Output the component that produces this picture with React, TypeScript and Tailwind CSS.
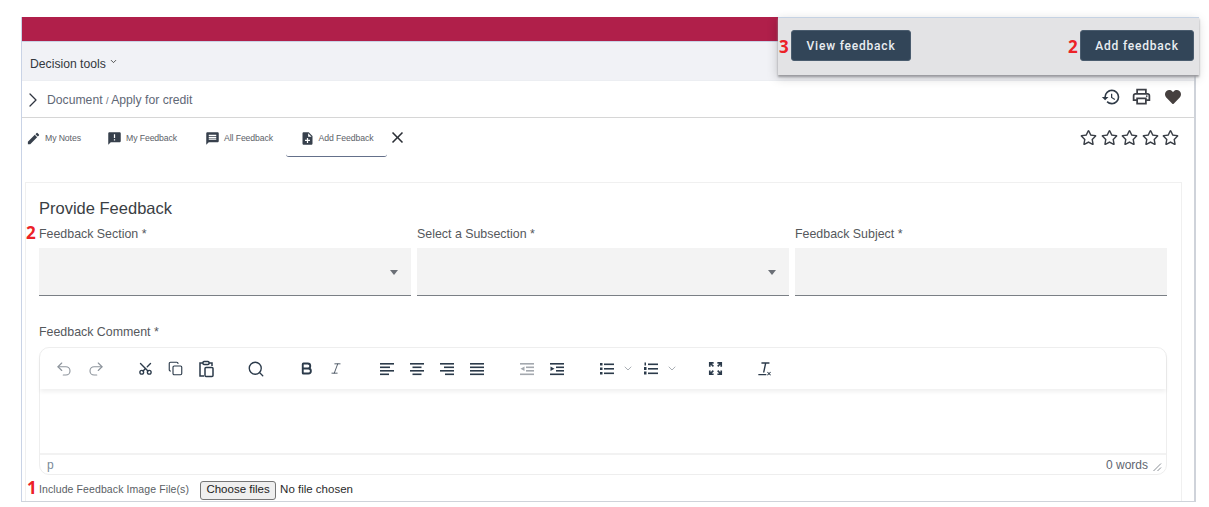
import React from 'react'
import { FaHeart, FaRegStar } from 'react-icons/fa'
import { MdAnnouncement, MdClose, MdEdit, MdHistory, MdMessage, MdNoteAdd, MdOutlinePrint } from 'react-icons/md'
import { Bold, ChevronDown, ChevronRight, Copy, Italic, Redo2, Scissors, Search, Undo2 } from 'lucide-react'

const Marker = ({ n, className }: { n: string; className: string }) => (
  <span className={`absolute font-['Open_Sans',sans-serif] text-[17px] leading-none font-bold text-[#ec2227] ${className}`}>
    {n}
  </span>
)

const Field = ({ label, arrow, width }: { label: string; arrow?: boolean; width: string }) => (
  <div className={`${width} shrink-0`}>
    <div className="h-[23px] pt-[2px] text-[12.4px] leading-[15px] text-[#55585c]">{label}</div>
    <div className="flex h-[48px] items-center justify-end border-b border-[#7a7f85] bg-[#f3f3f3] pr-[13px]">
      {arrow && <span className="mt-[2px] h-0 w-0 border-x-[4.5px] border-t-[5px] border-x-transparent border-t-[#6b6f76]" />}
    </div>
  </div>
)

const Tab = ({ icon, label, width, active }: { icon: React.ReactNode; label: string; width: string; active?: boolean }) => (
  <div className={`flex h-[39px] items-center ${width} ${active ? 'justify-center rounded-b-[3px] border-b border-[#64708a]' : 'pt-[2px]'}`}>
    <span className="mr-[4px] text-[#37404c]">{icon}</span>
    <span className="text-[8.7px] tracking-[-0.1px] text-[#5c6168]">{label}</span>
  </div>
)

const Tool = ({ children, className }: { children: React.ReactNode; className: string }) => (
  <span className={`flex shrink-0 items-center justify-center text-[#2b3a4a] ${className}`}>{children}</span>
)

// toolbar glyph made of horizontal bars: [x, y, w]
const Bars = ({ bars, children }: { bars: number[][]; children?: React.ReactNode }) => (
  <svg width="16" height="16" viewBox="0 0 16 16" fill="currentColor">
    {bars.map(([x, y, w], i) => (
      <rect key={i} x={x} y={y} width={w} height="1.600" />
    ))}
    {children}
  </svg>
)

const PasteIcon = () => (
  <svg width="18" height="18" viewBox="0 0 18 18" fill="none" stroke="currentColor" strokeWidth="1.500">
    <path d="M6 3H3v13h4M12 3h3v3" />
    <rect x="6" y="1.500" width="6" height="3" rx="1" />
    <rect x="8" y="7.500" width="8" height="9" rx="1" />
  </svg>
)

const FullscreenIcon = () => (
  <svg width="15" height="15" viewBox="0 0 16 16" fill="currentColor">
    <path d="M1 1h5v1.800H4.100l2.300 2.300-1.200 1.200-2.400-2.300V6H1zM15 1v5h-1.800V4L11 6.300 9.700 5.100 12 2.800h-2V1zM1 15v-5h1.800v2l2.300-2.300 1.200 1.200L4 13.200h2V15zM15 15h-5v-1.800h2L9.700 10.900l1.200-1.200 2.300 2.300v-2H15z" />
  </svg>
)

const ClearFormatIcon = () => (
  <svg width="18" height="18" viewBox="0 0 18 18" fill="currentColor">
    <path d="M5 1.500h9v1.500h-3.600L8.300 13H6.700L8.800 3H5zM1.500 14.500h9V16h-9zM12 12l1.500 1.500L15 12l.7.700-1.500 1.500 1.500 1.500-.7.700-1.500-1.500-1.500 1.500-.7-.7 1.500-1.500-1.500-1.500z" />
  </svg>
)

const alignLeft = [[1, 2, 14], [1, 5.500, 10], [1, 9, 14], [1, 12.500, 9]]
const alignCenter = [[1, 2, 14], [3.500, 5.500, 9], [1, 9, 14], [3.500, 12.500, 9]]
const alignRight = [[1, 2, 14], [5, 5.500, 10], [1, 9, 14], [6, 12.500, 9]]
const alignJustify = [[1, 2, 14], [1, 5.500, 14], [1, 9, 14], [1, 12.500, 14]]
const indentBars = [[1, 2, 14], [7, 5.500, 8], [7, 9, 8], [1, 12.500, 14]]
const listBars = [[5, 2.500, 10], [5, 7, 10], [5, 11.500, 10]]

export default function App() {
  return (
    <div className="relative h-[507px] w-[1209px] overflow-hidden bg-white pt-[17px] pl-[21px] font-['Liberation_Sans',Arial,sans-serif]">
      <div className="h-[485px] w-[1175px] overflow-hidden border-r-2 border-b border-l border-[#cfd3da] border-l-[#c9d3e6]">
        <div className="h-[24px] bg-[#b01f4a]" />
        <div className="flex h-[39px] border-t border-[#c9d3e6] bg-[#f1f2f6] pt-[15px] pl-[8px]">
          <span className="text-[12.2px] leading-[15px] text-[#33373d]">Decision tools</span>
          <ChevronDown size={9} strokeWidth={2.2} className="mt-[0px] ml-[3px] text-[#333]" />
        </div>
        <div className="flex h-[38px] items-center border-t border-b border-t-[#eceef2] border-b-[#d6d6d6] pt-[2px] pr-[13px]">
          <ChevronRight size={24} strokeWidth={1.300} className="-ml-[1px] text-[#2f3540]" />
          <span className="ml-[2px] text-[12.2px] text-[#5f6876]">
            Document <span className="text-[9px]">/</span> Apply for credit
          </span>
          <div className="mb-[7px] ml-auto flex items-center gap-[10px]">
            <MdHistory size={20} className="text-[#2f3a47]" />
            <MdOutlinePrint size={21} className="text-[#3c3f46]" />
            <FaHeart size={16} className="ml-[3px] text-[#46403f]" />
          </div>
        </div>
        <div className="flex h-[39px] pr-[15px] pl-[4px]">
          <div className="w-[81px]">
            <Tab icon={<MdEdit size={15} />} label="My Notes" width="w-full" />
          </div>
          <div className="w-[98px]">
            <Tab icon={<MdAnnouncement size={15} />} label="My Feedback" width="w-full" />
          </div>
          <div className="w-[81px]">
            <Tab icon={<MdMessage size={15} />} label="All Feedback" width="w-full" />
          </div>
          <Tab icon={<MdNoteAdd size={15} />} label="Add Feedback" width="w-[101px] pt-[3px]" active />
          <MdClose size={19} className="mt-[10px] ml-[1px] text-[#2b2f36]" />
          <div className="mt-[11px] ml-auto flex h-[16px] gap-[3.500px] text-[#3a3f47]">
            {[0, 1, 2, 3, 4].map((i) => (
              <FaRegStar key={i} size={17} />
            ))}
          </div>
        </div>
        <div className="mt-[25px] ml-[3px] h-[340px] w-[1157px] border border-[#f0f0f0] pt-[15px] pr-[13px] pl-[13px]">
          <div className="text-[16.500px] leading-[20px] text-[#3a3e44]">Provide Feedback</div>
          <div className="relative mt-[7px] flex gap-[6px]">
            <Marker n="2" className="top-[-1px] left-[-13px]" />
            <Field label="Feedback Section *" arrow width="w-[372px]" />
            <Field label="Select a Subsection *" arrow width="w-[372px]" />
            <Field label="Feedback Subject *" width="w-[372px]" />
          </div>
          <div className="mt-[29px] h-[22px] text-[12.4px] leading-[15px] text-[#55585c]">Feedback Comment *</div>
          <div className="w-[1128px] rounded-[10px] border border-[#eeeeee]">
            <div className="flex h-[41px] items-center rounded-t-[10px] pl-[15px] shadow-[0_3px_4px_rgba(0,0,0,0.06)]">
              <Tool className="w-[18px] text-[#8d949c]"><Undo2 size={18} strokeWidth={1.500} /></Tool>
              <Tool className="ml-[14px] w-[18px] text-[#8d949c]"><Redo2 size={18} strokeWidth={1.500} /></Tool>
              <Tool className="ml-[32px] w-[16px]"><Scissors size={15} strokeWidth={2.2} className="-rotate-90" /></Tool>
              <Tool className="ml-[14px] w-[16px]"><Copy size={15} strokeWidth={1.8} /></Tool>
              <Tool className="ml-[14px] w-[18px]"><PasteIcon /></Tool>
              <Tool className="ml-[32px] w-[18px]"><Search size={18} strokeWidth={1.8} /></Tool>
              <Tool className="ml-[33px] w-[16px]"><Bold size={15} strokeWidth={3} /></Tool>
              <Tool className="ml-[15px] w-[14px] text-[#4a5562]"><Italic size={15} strokeWidth={1.6} /></Tool>
              <Tool className="ml-[36px] w-[16px]"><Bars bars={alignLeft} /></Tool>
              <Tool className="ml-[14px] w-[16px]"><Bars bars={alignCenter} /></Tool>
              <Tool className="ml-[14px] w-[16px]"><Bars bars={alignRight} /></Tool>
              <Tool className="ml-[14px] w-[16px]"><Bars bars={alignJustify} /></Tool>
              <Tool className="ml-[34px] w-[16px] text-[#a3a8ae]">
                <Bars bars={indentBars}><path d="M5.500 5.500v4.500L1.500 7.800z" /></Bars>
              </Tool>
              <Tool className="ml-[14px] w-[16px]">
                <Bars bars={indentBars}><path d="M1.500 5.500v4.500l4-2.200z" /></Bars>
              </Tool>
              <Tool className="ml-[34px] w-[16px]">
                <Bars bars={listBars}>
                  <rect x="1" y="2" width="2.500" height="2.500" />
                  <rect x="1" y="6.500" width="2.500" height="2.500" />
                  <rect x="1" y="11" width="2.500" height="2.500" />
                </Bars>
              </Tool>
              <Tool className="ml-[7px] w-[12px] text-[#8d949c]"><ChevronDown size={17} strokeWidth={1.500} /></Tool>
              <Tool className="ml-[9px] w-[16px]">
                <Bars bars={listBars}>
                  <rect x="1.500" y="1.500" width="1.500" height="3" />
                  <rect x="1" y="6" width="2.500" height="3" />
                  <rect x="1" y="10.500" width="2.500" height="3" />
                </Bars>
              </Tool>
              <Tool className="ml-[7px] w-[12px] text-[#8d949c]"><ChevronDown size={17} strokeWidth={1.500} /></Tool>
              <Tool className="ml-[29px] w-[16px]"><FullscreenIcon /></Tool>
              <Tool className="ml-[34px] w-[16px]"><ClearFormatIcon /></Tool>
            </div>
            <div className="h-[64px]" />
            <div className="flex h-[21px] items-center border-t-2 border-[#f2f2f2] pr-[4px] pl-[7px] text-[12px]">
              <span className="text-[#7a8a99]">p</span>
              <span className="ml-auto text-[#5f6670]">0 words</span>
              <svg width="10" height="10" viewBox="0 0 10 10" className="mt-[4px] ml-[4px]" stroke="#8a8f96" strokeWidth="1">
                <path d="M1.500 9 9 1.500M5.500 9 9 5.500" />
              </svg>
            </div>
          </div>
          <div className="relative mt-[5px] flex h-[20px] items-center">
            <Marker n="1" className="top-[-1px] left-[-12px]" />
            <span className="text-[10.500px] tracking-[0.1px] text-[#5a5e64]">Include Feedback Image File(s)</span>
            <button className="ml-[11px] h-[19px] w-[76px] rounded-[3px] border border-[#767676] bg-[#efefef] text-[11.500px] leading-none text-[#222]">
              Choose files
            </button>
            <span className="ml-[4px] text-[11.500px] text-[#2b2b2b]">No file chosen</span>
          </div>
        </div>
      </div>

      <div className="absolute top-[17px] left-[778px] flex h-[58px] w-[421px] items-start justify-between border-t border-[#c5d2e3] bg-[#e3e3e5] pt-[12px] pr-[5px] pl-[13px] shadow-[0_2px_2px_#9a9a9e,-1px_3px_10px_rgba(0,0,0,0.18)]">
        <Marker n="3" className="top-[20px] left-[1px]" />
        <Marker n="2" className="top-[20px] left-[290px]" />
        <button className="h-[31px] w-[120px] rounded-[3px] border border-[#4a5c6e] bg-[#324558] font-['Roboto',sans-serif] text-[12px] font-medium tracking-[0.8px] text-[#e9edf1]">
          View feedback
        </button>
        <button className="h-[31px] w-[114px] rounded-[3px] border border-[#4a5c6e] bg-[#324558] font-['Roboto',sans-serif] text-[12px] font-medium tracking-[0.8px] text-[#e9edf1]">
          Add feedback
        </button>
      </div>
    </div>
  )
}
